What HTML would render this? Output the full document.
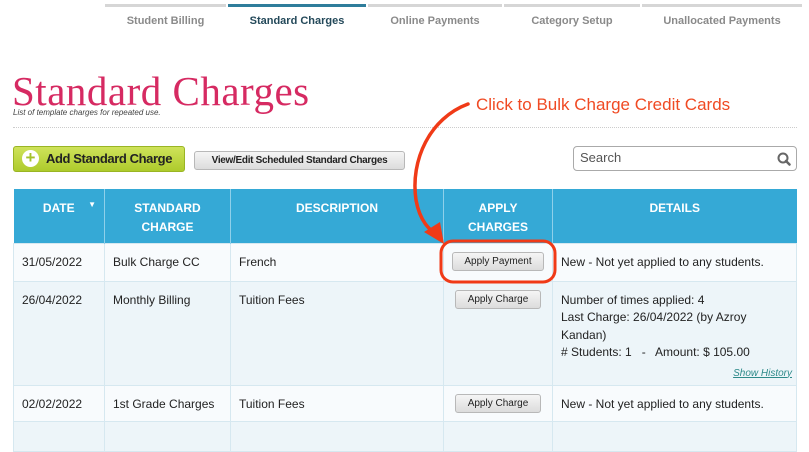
<!DOCTYPE html>
<html><head><style>
*{margin:0;padding:0;box-sizing:border-box}
body{width:809px;height:433px;background:#fff;position:relative;overflow:hidden;font-family:"Liberation Sans",sans-serif;color:#333}
.a{position:absolute}
.tab{position:absolute;top:4px;height:3px;background:#d6d6d6}
.tt{position:absolute;top:15px;font-size:11px;font-weight:bold;color:#8a8a8a;text-align:center}
.btn{position:absolute;background:linear-gradient(#f5f5f5,#dcdcdc);border:1px solid #b8b8b8;border-radius:3px;font-size:10px;color:#222;text-align:center}
table{position:absolute;left:13px;top:189px;border-collapse:collapse;width:784px;font-size:12px}
th{background:#35a9d6;color:#fff;font-weight:bold;font-size:12px;vertical-align:top;padding-top:10px;line-height:19px;border-right:1px solid #8fd0ea;height:54px}
td{vertical-align:top;border:1px solid #d6e8f0;padding:10px 8px 0 8px;line-height:17.5px;color:#222}
</style></head><body>
<div class="tab" style="left:105px;width:121px"></div>
<div class="tab" style="left:228px;width:138px;background:#2e7d9b"></div>
<div class="tab" style="left:368px;width:134px"></div>
<div class="tab" style="left:504px;width:136px"></div>
<div class="tab" style="left:642px;width:160px"></div>
<div class="tt" style="left:105px;width:121px">Student Billing</div>
<div class="tt" style="left:228px;width:138px;color:#24495a">Standard Charges</div>
<div class="tt" style="left:368px;width:134px">Online Payments</div>
<div class="tt" style="left:504px;width:136px">Category Setup</div>
<div class="tt" style="left:642px;width:160px">Unallocated Payments</div>
<div class="a" style="left:12px;top:67px;font-family:'Liberation Serif',serif;font-size:41px;color:#d62a62;letter-spacing:0.5px">Standard Charges</div>
<div class="a" style="left:13px;top:108px;font-size:8px;font-style:italic;color:#444">List of template charges for repeated use.</div>
<div class="a" style="left:13px;top:127px;width:784px;border-top:1px dotted #ccc"></div>
<div class="a" style="left:13px;top:146px;width:172px;height:26px;background:linear-gradient(#cfe35a,#aecb2c);border-radius:3px;border:1px solid #9ab524"></div>
<div class="a" style="left:22px;top:150px;width:17px;height:17px;border-radius:50%;background:#fff;color:#a4c22a;font-weight:bold;font-size:17px;line-height:16px;text-align:center">+</div>
<div class="a" style="left:46px;top:151px;font-size:13px;font-weight:bold;color:#222;letter-spacing:-0.4px">Add Standard Charge</div>
<div class="btn" style="left:194px;top:151px;width:211px;height:19px;line-height:17px;font-weight:bold;letter-spacing:-0.3px">View/Edit Scheduled Standard Charges</div>
<div class="a" style="left:573px;top:146px;width:224px;height:25px;border:1px solid #aaa;border-radius:4px;font-size:13px;color:#555;padding:3px 6px">Search
<svg style="position:absolute;right:5px;top:5px" width="14" height="14"><circle cx="6" cy="6" r="4.5" fill="none" stroke="#666" stroke-width="2"/><path d="M9 9 L12.5 12.5" stroke="#666" stroke-width="2.5" stroke-linecap="round"/></svg></div>
<table>
<tr><th style="width:91px;position:relative">DATE<span style="position:absolute;right:8px;top:6px;font-size:8px">&#9660;</span></th><th style="width:126px">STANDARD<br>CHARGE</th><th style="width:213px">DESCRIPTION</th><th style="width:108px">APPLY<br>CHARGES</th><th style="border-right:none">DETAILS</th></tr>
<tr style="background:#f8fbfd;height:38px"><td>31/05/2022</td><td>Bulk Charge CC</td><td>French</td><td style="text-align:center;padding-top:8px"><span class="btn" style="position:static;display:inline-block;width:92px;height:19px;line-height:17px">Apply Payment</span></td><td>New - Not yet applied to any students.</td></tr>
<tr style="background:#edf5f9;height:104px"><td>26/04/2022</td><td>Monthly Billing</td><td>Tuition Fees</td><td style="text-align:center;padding-top:8px"><span class="btn" style="position:static;display:inline-block;width:86px;height:19px;line-height:17px">Apply Charge</span></td><td style="position:relative;padding-right:12px">Number of times applied: 4<br>Last Charge: 26/04/2022 (by Azroy Kandan)<br># Students: 1 &nbsp; - &nbsp; Amount: $ 105.00<div style="text-align:right;font-size:10px;font-style:italic;color:#2e8a8a;text-decoration:underline;margin-top:3px;margin-right:-8px">Show History</div></td></tr>
<tr style="background:#f8fbfd;height:36px"><td>02/02/2022</td><td>1st Grade Charges</td><td>Tuition Fees</td><td style="text-align:center;padding-top:8px"><span class="btn" style="position:static;display:inline-block;width:86px;height:19px;line-height:17px">Apply Charge</span></td><td>New - Not yet applied to any students.</td></tr>
<tr style="background:#edf5f9;height:30px"><td></td><td></td><td></td><td></td><td></td></tr>
</table>
<div class="a" style="left:476px;top:95px;font-size:17px;color:#f04a23">Click to Bulk Charge Credit Cards</div>
<svg class="a" style="left:0;top:0" width="809" height="433">
<path d="M468 104 C430 118 410 160 416 200 C420 222 430 230 436 234" fill="none" stroke="#f03a17" stroke-width="3.5" stroke-linecap="round"/>
<path d="M424 232 L444 244 L440 222 Z" fill="#f03a17"/>
<rect x="441" y="241" width="114" height="41" rx="12" fill="none" stroke="#f03a17" stroke-width="3"/>
</svg>
</body></html>
